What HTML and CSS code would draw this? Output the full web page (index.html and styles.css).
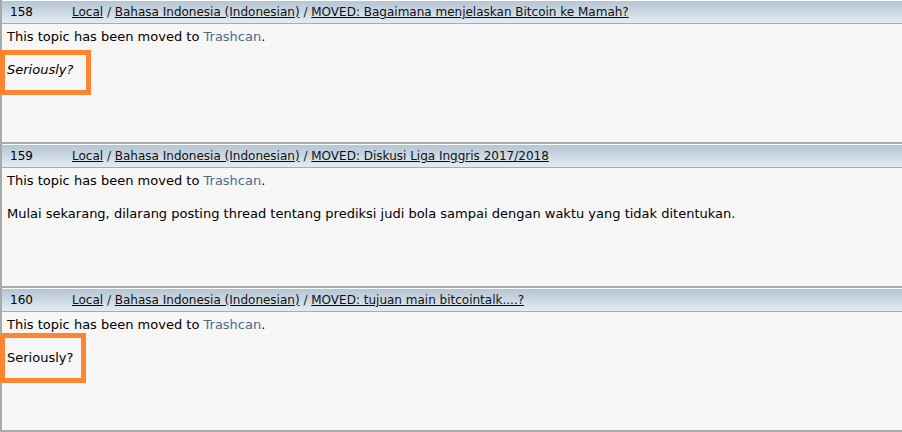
FILE: index.html
```html
<!DOCTYPE html>
<html lang="en">
<head>
  <meta charset="UTF-8">
  <title>Post history</title>
  <link rel="stylesheet" href="styles.css">
</head>
<body>
  <div class="posts">

    <div class="post">
      <div class="post-head">
        <span class="post-num">158</span>
        <span class="post-path">
          <a href="#">Local</a> / <a href="#">Bahasa Indonesia (Indonesian)</a> / <a href="#">MOVED: Bagaimana menjelaskan Bitcoin ke Mamah?</a>
        </span>
      </div>
      <div class="post-body">
        This topic has been moved to <a class="board-link" href="#">Trashcan</a>.<br><br>
        <em>Seriously?</em>
        <span class="mark mark-first"></span>
      </div>
    </div>

    <div class="post">
      <div class="post-head">
        <span class="post-num">159</span>
        <span class="post-path">
          <a href="#">Local</a> / <a href="#">Bahasa Indonesia (Indonesian)</a> / <a href="#">MOVED: Diskusi Liga Inggris 2017/2018</a>
        </span>
      </div>
      <div class="post-body">
        This topic has been moved to <a class="board-link" href="#">Trashcan</a>.<br><br>
        Mulai sekarang, dilarang posting thread tentang prediksi judi bola sampai dengan waktu yang tidak ditentukan.
      </div>
    </div>

    <div class="post">
      <div class="post-head">
        <span class="post-num">160</span>
        <span class="post-path">
          <a href="#">Local</a> / <a href="#">Bahasa Indonesia (Indonesian)</a> / <a href="#">MOVED: tujuan main bitcointalk....?</a>
        </span>
      </div>
      <div class="post-body">
        This topic has been moved to <a class="board-link" href="#">Trashcan</a>.<br><br>
        Seriously?
        <span class="mark mark-last"></span>
      </div>
    </div>

  </div>
</body>
</html>
```

FILE: styles.css
```css
html {
  overflow: hidden;
}

body {
  margin: 0;
  background-color: #f6f6f6;
  font-family: "DejaVu Sans", Verdana, sans-serif;
  font-size: 13px;
  color: #000;
}

.posts {
  margin-top: -1px;
  margin-right: -6px;
}

.post {
  border: 1px solid #a9a9a9;
  border-left-width: 2px;
  background-color: #f6f6f6;
}

.post:last-child {
  border-bottom-width: 2px;
}

.post-head {
  display: flex;
  height: 22px;
  line-height: 22px;
  font-size: 12px;
  border-top: 1px solid #fff;
  border-bottom: 1px solid #9eaebe;
  background: linear-gradient(to bottom, #b5c5d3, #e3ecf4);
  white-space: nowrap;
}

.post-num {
  width: 62px;
  padding-left: 8px;
  flex-shrink: 0;
}

.post-path {
  color: #222;
}

.post-path a {
  color: #111;
  text-decoration: underline;
}

.post-body {
  position: relative;
  height: 109px;
  padding: 5px 5px 4px;
  line-height: 16.5px;
}

.board-link {
  color: #476c8e;
  text-decoration: none;
}

/* orange annotation boxes drawn over the screenshot */
.mark {
  position: absolute;
  left: -2px;
  border: 5px solid #fb8530;
}

.mark-first {
  top: 26px;
  width: 81px;
  height: 35px;
}

.mark-last {
  top: 21px;
  width: 76px;
  height: 40px;
}
```
